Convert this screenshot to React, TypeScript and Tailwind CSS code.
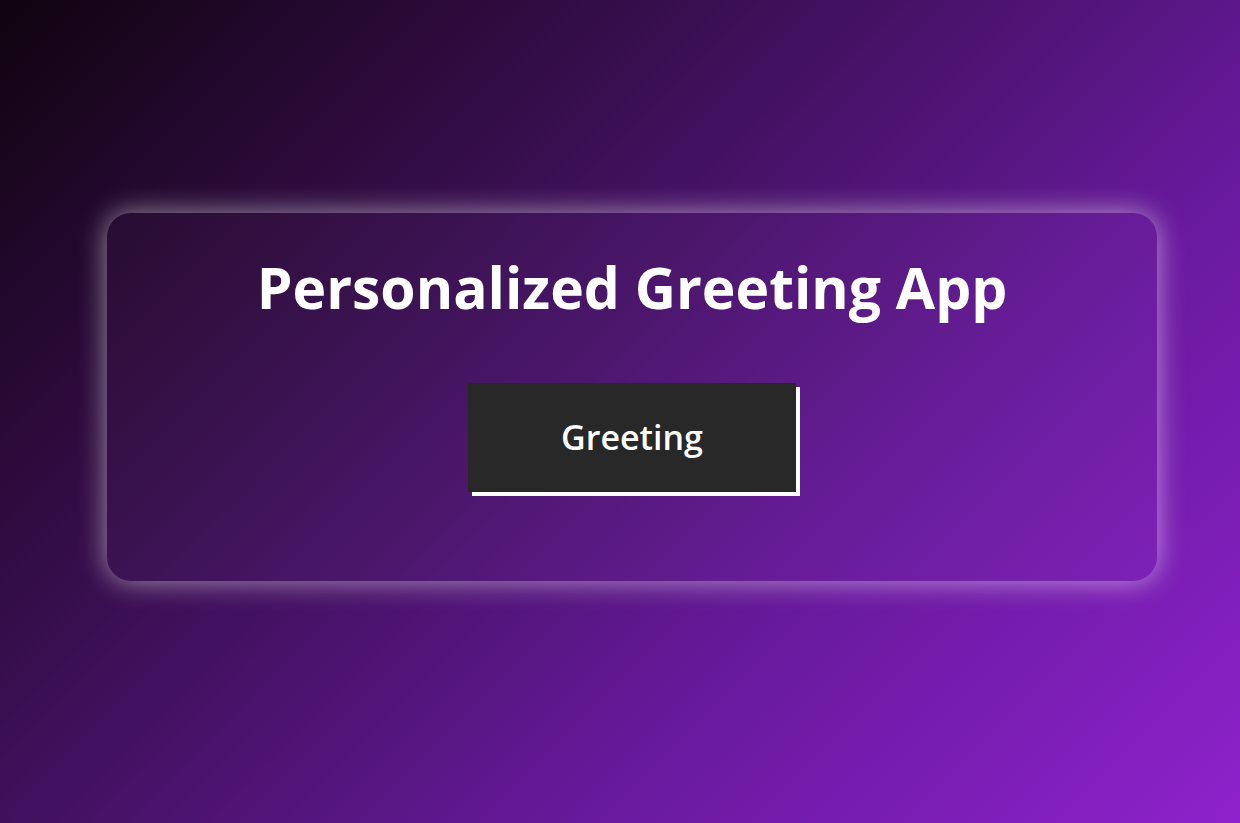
export default function App() {
  return (
    <div className="min-h-[823px] w-full overflow-hidden bg-[linear-gradient(135deg,#10030f_0%,#3a0f52_35%,#6a1aa0_70%,#8e22cc_100%)] pt-[213px] font-['Open_Sans',sans-serif]">
      <div className="ml-[107px] flex h-[368px] w-[1050px] flex-col items-center rounded-[24px] bg-white/[0.02] pt-[38px] shadow-[0_0_28px_rgba(255,255,255,0.55)]">
        <h1 className="text-[57px] font-bold leading-[72px] text-white">
          Personalized Greeting App
        </h1>

        <button className="mt-[60px] h-[109px] w-[328px] bg-[#282828] text-[34px] font-semibold text-white shadow-[4px_4px_0_#ffffff]">
          Greeting
        </button>
      </div>
    </div>
  );
}
